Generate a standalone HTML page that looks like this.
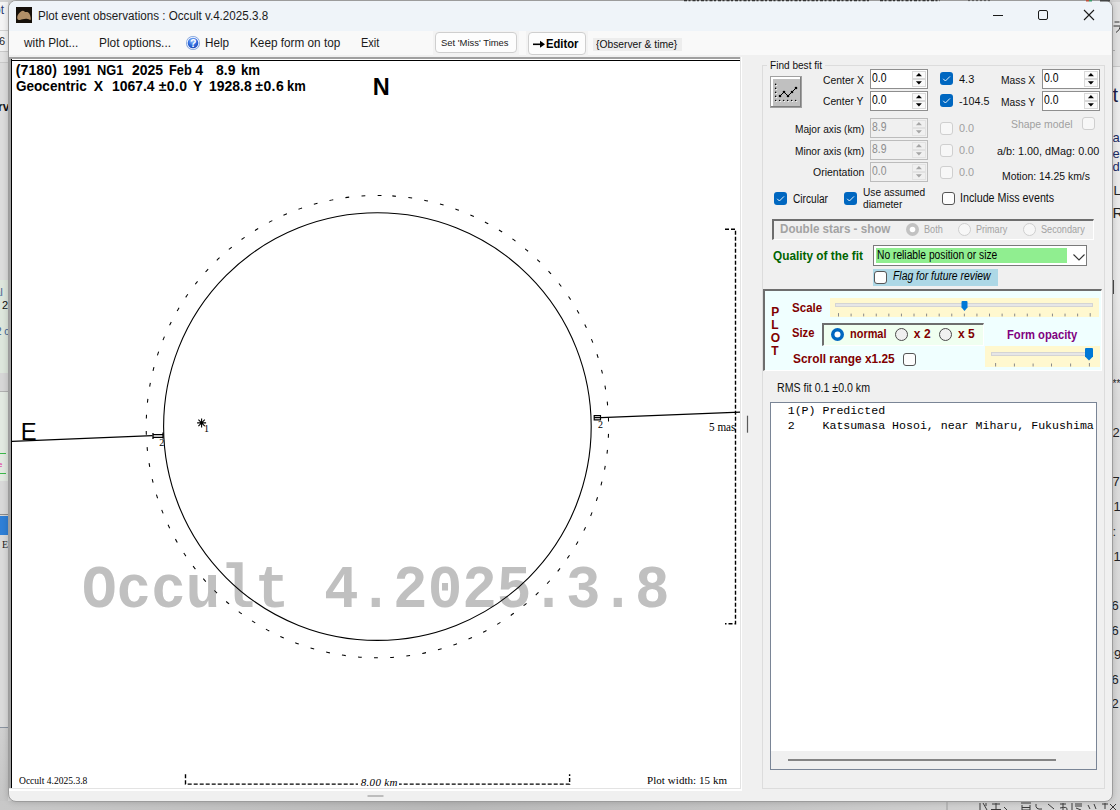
<!DOCTYPE html>
<html><head><meta charset="utf-8">
<style>
*{box-sizing:border-box}
html,body{margin:0;padding:0}
body{width:1120px;height:810px;overflow:hidden;position:relative;background:#d4d4d4;font-family:"Liberation Sans",sans-serif;color:#000}
.a{position:absolute;white-space:pre;line-height:1}
svg{position:absolute;overflow:visible}
</style></head>
<body>
<div class="a" style="left:0px;top:0px;width:1120px;height:810px;background:#d6d6d6"></div>
<div class="a" style="left:0px;top:0px;width:8px;height:30px;background:#f4f4f4"></div>
<div class="a" style="left:0px;top:30px;width:8px;height:1px;background:#d0d0d0"></div>
<div class="a" style="left:0px;top:31px;width:8px;height:20px;background:#f2f2f2"></div>
<div class="a" style="left:0px;top:51px;width:8px;height:1px;background:#c8c8c8"></div>
<div class="a" style="left:0px;top:52px;width:8px;height:10px;background:#e2e2e2"></div>
<div class="a" style="left:0px;top:62px;width:8px;height:1px;background:#c8c8c8"></div>
<div class="a" style="left:0px;top:63px;width:8px;height:217px;background:#dcdcdc"></div>
<div class="a" style="left:0px;top:280px;width:8px;height:93px;background:#dde6dc"></div>
<div class="a" style="left:0px;top:373px;width:8px;height:19px;background:#d6d6d6"></div>
<div class="a" style="left:0px;top:391px;width:8px;height:1px;background:#b0b0b0"></div>
<div class="a" style="left:-6px;top:399px;width:8px;height:19px;border:1px solid #a8a8a8;border-radius:3px;background:#ececec"></div>
<div class="a" style="left:-6px;top:425px;width:8px;height:20px;border:1px solid #a8a8a8;border-radius:3px;background:#ececec"></div>
<div class="a" style="left:4.5px;top:449px;width:3px;height:25px;border:1px solid #a8a8a8;border-radius:2px;background:#e8e8e8"></div>
<div class="a" style="left:0px;top:392px;width:8px;height:89px;background:#e2e9e1"></div>
<div class="a" style="left:0px;top:453px;width:6px;height:1px;background:#3cb84a"></div>
<div class="a" style="left:0px;top:473px;width:6px;height:1px;background:#3cb84a"></div>
<div class="a" style="left:0px;top:481px;width:8px;height:33px;background:#d8d8d8"></div>
<div class="a" style="left:0px;top:514px;width:8px;height:1px;background:#8a8a8a"></div>
<div class="a" style="left:0px;top:516px;width:8px;height:19px;background:#2f7fd6"></div>
<div class="a" style="left:0px;top:535px;width:8px;height:192px;background:#dadada"></div>
<div class="a" style="left:0px;top:727px;width:8px;height:1px;background:#8a93a0"></div>
<div class="a" style="left:0px;top:728px;width:8px;height:82px;background:linear-gradient(180deg,#d0d0d0,#c4c4c4)"></div>
<div class="a" style="left:0px;top:801px;width:1120px;height:9px;background:linear-gradient(90deg,#c8c8c8,#b9b9b9 40%,#c6c6c6 70%,#d8d8d8)"></div>
<div class="a" style="left:1112px;top:0px;width:8px;height:810px;background:linear-gradient(180deg,#e0e0e0 0,#e0e0e0 66px,#c8c8c8 66px,#c8c8c8 67px,#ececec 67px,#e8e8e8 300px,#dcdcdc 400px,#d6d6d6 810px)"></div>
<div class="a" style="left:0px;top:0px;width:1120px;height:2px;background:#d2d2d2"></div>
<div class="a" style="left:7.5px;top:0px;width:1105px;height:802px;background:#f0f0f0;border-radius:8px;border:1px solid #9c9c9c;box-shadow:0 0 6px rgba(0,0,0,0.18)"></div>
<div class="a" style="left:8.5px;top:1px;width:1103px;height:30px;background:#eff4f9;border-radius:7px 7px 0 0"></div>
<div class="a" style="left:9px;top:31px;width:1102px;height:24px;background:#f9f9f9"></div>
<svg style="left:16px;top:7px" width="16" height="16" viewBox="0 0 16 16"><rect width="16" height="16" fill="#15100a"/><path d="M1.2 11 C1 8 3 6 5 4.5 C6 3.5 7.5 3.2 8.5 4.5 C9.5 5.5 10.5 4.5 12 5.2 C14 6.5 15 10 14.8 12.8 C13.5 13 12 11.5 10 11.8 C7 12.2 6 12.5 4 13 C2.5 13.2 1.3 12.5 1.2 11 Z" fill="#b08f68"/></svg>
<div class="a" style="left:37.50px;top:10px;font-size:12px;color:#1b1b1b;transform:scaleX(0.9702);transform-origin:0 0;">Plot event observations : Occult v.4.2025.3.8</div>
<div class="a" style="left:993px;top:15px;width:10px;height:1px;background:#1a1a1a"></div>
<div class="a" style="left:1038px;top:10px;width:10px;height:10px;border:1px solid #1a1a1a;border-radius:2px"></div>
<svg style="left:1083px;top:9px" width="12" height="12" viewBox="0 0 12 12"><path d="M1 1L11 11M11 1L1 11" stroke="#1a1a1a" stroke-width="1.1"/></svg>
<div class="a" style="left:24.18px;top:37px;font-size:12px;color:#1a1a1a;transform:scaleX(0.9818);transform-origin:0 0;">with Plot...</div>
<div class="a" style="left:98.60px;top:37px;font-size:12px;color:#1a1a1a;transform:scaleX(0.9907);transform-origin:0 0;">Plot options...</div>
<svg style="left:186px;top:36px" width="14" height="14" viewBox="0 0 14 14"><defs><radialGradient id="hg" cx="0.45" cy="0.3" r="0.75"><stop offset="0" stop-color="#9cc4ff"/><stop offset="0.55" stop-color="#2f6de0"/><stop offset="1" stop-color="#1b44b0"/></radialGradient></defs><circle cx="7" cy="7" r="7" fill="#7d9fd8"/><circle cx="7" cy="7" r="6.2" fill="#eef4ff"/><circle cx="7" cy="7" r="5.3" fill="url(#hg)"/><text x="7.1" y="10.9" font-family="Liberation Sans" font-weight="bold" font-size="10.5" fill="#fff" text-anchor="middle">?</text></svg>
<div class="a" style="left:204.50px;top:37px;font-size:12px;color:#1a1a1a;transform:scaleX(0.9758);transform-origin:0 0;">Help</div>
<div class="a" style="left:250.40px;top:37px;font-size:12px;color:#1a1a1a;transform:scaleX(0.9807);transform-origin:0 0;">Keep form on top</div>
<div class="a" style="left:360.70px;top:37px;font-size:12px;color:#1a1a1a;transform:scaleX(0.9192);transform-origin:0 0;">Exit</div>
<div class="a" style="left:433px;top:31px;width:86px;height:25px;background:#f3f3f3"></div>
<div class="a" style="left:435px;top:32px;width:82px;height:21px;background:#fdfdfd;border:1px solid #cfcfcf;border-radius:4px"></div>
<div class="a" style="left:441.00px;top:38px;font-size:9.5px;color:#1a1a1a;transform:scaleX(0.9935);transform-origin:0 0;">Set &#x27;Miss&#x27; Times</div>
<div class="a" style="left:526px;top:31px;width:62px;height:25px;background:#f3f3f3"></div>
<div class="a" style="left:528px;top:32px;width:58px;height:22.5px;background:#fdfdfd;border:1px solid #cfcfcf;border-radius:4px"></div>
<svg style="left:533px;top:40px" width="13" height="9" viewBox="0 0 13 9"><path d="M0 4.3 H9" stroke="#000" stroke-width="1.6"/><path d="M7 0.8 L12 4.3 L7 7.8 Z" fill="#000"/></svg>
<div class="a" style="left:546.00px;top:38px;font-size:12.5px;font-weight:bold;transform:scaleX(0.8995);transform-origin:0 0;">Editor</div>
<div class="a" style="left:593px;top:38px;width:89px;height:13px;background:#ededed"></div>
<div class="a" style="left:596.00px;top:39px;font-size:11px;color:#101010;transform:scaleX(0.9353);transform-origin:0 0;">{Observer &amp; time}</div>
<div class="a" style="left:9px;top:57px;width:733px;height:734px;background:#fff"></div>
<div class="a" style="left:9px;top:57px;width:732px;height:2px;background:#a0a0a0"></div>
<div class="a" style="left:9px;top:57px;width:2px;height:731px;background:#a0a0a0"></div>
<div class="a" style="left:11px;top:59.6px;width:730px;height:1.5px;background:#000"></div>
<div class="a" style="left:11px;top:59px;width:1.2px;height:729px;background:#000"></div>
<div class="a" style="left:9px;top:788px;width:732px;height:1px;background:#e3e3e3"></div>
<div class="a" style="left:740px;top:57px;width:1px;height:732px;background:#e3e3e3"></div>
<div class="a" style="left:12px;top:61px;width:728px;height:727px;background:#fff"></div>
<div class="a" style="left:15.75px;top:63px;font-size:14px;font-weight:bold;letter-spacing:0.129px;">(7180)</div>
<div class="a" style="left:62.90px;top:63px;font-size:14px;font-weight:bold;transform:scaleX(0.8961);transform-origin:0 0;">1991</div>
<div class="a" style="left:96.80px;top:63px;font-size:14px;font-weight:bold;transform:scaleX(0.9172);transform-origin:0 0;">NG1</div>
<div class="a" style="left:132.30px;top:63px;font-size:14px;font-weight:bold;transform:scaleX(0.9981);transform-origin:0 0;">2025</div>
<div class="a" style="left:169.40px;top:63px;font-size:14px;font-weight:bold;transform:scaleX(0.9163);transform-origin:0 0;">Feb</div>
<div class="a" style="left:195.30px;top:63px;font-size:14px;font-weight:bold;">4</div>
<div class="a" style="left:215.60px;top:63px;font-size:14px;font-weight:bold;transform:scaleX(0.9961);transform-origin:0 0;">8.9</div>
<div class="a" style="left:240.60px;top:63px;font-size:14px;font-weight:bold;transform:scaleX(0.9451);transform-origin:0 0;">km</div>
<div class="a" style="left:16.00px;top:79px;font-size:14px;font-weight:bold;transform:scaleX(0.9679);transform-origin:0 0;">Geocentric</div>
<div class="a" style="left:93.70px;top:79px;font-size:14px;font-weight:bold;">X</div>
<div class="a" style="left:111.80px;top:79px;font-size:14px;font-weight:bold;transform:scaleX(0.9946);transform-origin:0 0;">1067.4</div>
<div class="a" style="left:158.70px;top:79px;font-size:14px;font-weight:bold;letter-spacing:0.380px;">±0.0</div>
<div class="a" style="left:193.00px;top:79px;font-size:14px;font-weight:bold;">Y</div>
<div class="a" style="left:208.90px;top:79px;font-size:14px;font-weight:bold;transform:scaleX(0.9957);transform-origin:0 0;">1928.8</div>
<div class="a" style="left:255.30px;top:79px;font-size:14px;font-weight:bold;letter-spacing:0.414px;">±0.6</div>
<div class="a" style="left:286.60px;top:79px;font-size:14px;font-weight:bold;transform:scaleX(0.9249);transform-origin:0 0;">km</div>
<div class="a" style="left:372.80px;top:76px;font-size:23.5px;font-weight:bold;">N</div>
<div class="a" style="left:20.85px;top:420px;font-size:23.8px;">E</div>
<div class="a" style="left:82.40px;top:563.27px;font-size:57.7px;font-family:'Liberation Mono';font-weight:bold;color:#c0c0c0;transform:scale(0.9985,1.05);transform-origin:0 44.23px;">Occult 4.2025.3.8</div>
<svg style="left:0;top:0" width="1120" height="810" viewBox="0 0 1120 810">
<defs><clipPath id="pc"><rect x="12" y="61" width="728" height="727"/></clipPath></defs>
<g clip-path="url(#pc)" fill="none" stroke="#000">
<circle cx="377.4" cy="426.6" r="213.8" stroke-width="1.1"/>
<circle cx="377.4" cy="426.6" r="231.2" stroke-width="1.05" stroke-dasharray="3.8 12.35" transform="rotate(-86.3 377.4 426.6)"/>
<path d="M12 441.3 L152.5 435.7" stroke-width="1.2"/>
<path d="M601 417.7 L740 412.2" stroke-width="1.2"/>
<path d="M153 433 V439 M163 432.5 V438.5 M153 434.6 H163 M153 437.4 H163" stroke-width="1.3"/>
<path d="M594.2 415 V420.5 M600.5 415 V420.5 M594.2 415.6 H600.5 M594.2 417.7 H600.5 M594.2 419.8 H600.5" stroke-width="1.2"/>
<path d="M197.1 422.9 H206.1 M201.6 418.4 V427.4 M198.4 419.7 L204.8 426.1 M204.8 419.7 L198.4 426.1" stroke-width="1.1"/>
<path d="M725 229.3 H735.5 V623.8 H725" stroke-width="1.4" stroke-dasharray="4 2"/>
<path d="M185.5 774.3 V784.1 H569.6 V774.3" stroke-width="1.4" stroke-dasharray="4 2"/>
</g>
<rect x="746.9" y="415.7" width="1.2" height="17" fill="#5a5a5a"/>
</svg>
<div class="a" style="left:159.30px;top:438px;font-size:10px;font-family:'Liberation Serif';">2</div>
<div class="a" style="left:598.00px;top:420px;font-size:10px;font-family:'Liberation Serif';">2</div>
<div class="a" style="left:204.00px;top:424px;font-size:10px;font-family:'Liberation Serif';">1</div>
<div class="a" style="left:709.30px;top:421px;font-size:12px;font-family:'Liberation Serif';transform:scaleX(0.9316);transform-origin:0 0;">5 mas</div>
<div class="a" style="left:18.75px;top:776px;font-size:10px;font-family:'Liberation Serif';transform:scaleX(0.9532);transform-origin:0 0;">Occult 4.2025.3.8</div>
<div class="a" style="left:647.00px;top:775px;font-size:11px;font-family:'Liberation Serif';letter-spacing:0.057px;">Plot width: 15 km</div>
<div class="a" style="left:358px;top:776px;width:41px;height:10px;background:#fff"></div>
<div class="a" style="left:360.70px;top:777px;font-size:11px;font-family:'Liberation Serif';font-style:italic;letter-spacing:0.320px;">8.00 km</div>
<div class="a" style="left:761.5px;top:64.5px;width:343px;height:724px;border:1px solid #dcdcdc"></div>
<div class="a" style="left:767px;top:58px;width:58px;height:12px;background:#f0f0f0"></div>
<div class="a" style="left:770.00px;top:60px;font-size:11.5px;color:#101010;transform:scaleX(0.8764);transform-origin:0 0;">Find best fit</div>
<svg style="left:770px;top:76px" width="32" height="32" viewBox="0 0 32 32">
<rect x="0" y="0" width="32" height="32" fill="#a0a0a0"/>
<rect x="1" y="1" width="30" height="30" fill="#7f7f7f"/>
<rect x="1" y="1" width="29" height="29" fill="#fff"/>
<rect x="3" y="3" width="27" height="27" fill="#c0c0c0"/>
<g fill="#fff"><circle cx="6.2" cy="8.9" r="1.1"/><circle cx="6.2" cy="12.9" r="1.1"/><circle cx="6.2" cy="16.9" r="1.1"/><circle cx="6.2" cy="20.9" r="1.1"/><circle cx="6.2" cy="25" r="1.1"/><circle cx="10.2" cy="25" r="1.1"/><circle cx="14.2" cy="25" r="1.1"/><circle cx="18.2" cy="25" r="1.1"/><circle cx="22.2" cy="25" r="1.1"/><circle cx="26.2" cy="25" r="1.1"/></g>
<g fill="#000"><circle cx="5.7" cy="8.4" r="0.8"/><circle cx="5.7" cy="12.4" r="0.8"/><circle cx="5.7" cy="16.4" r="0.8"/><circle cx="5.7" cy="20.4" r="0.8"/><circle cx="5.7" cy="24.5" r="0.8"/><circle cx="9.7" cy="24.5" r="0.8"/><circle cx="13.7" cy="24.5" r="0.8"/><circle cx="17.7" cy="24.5" r="0.8"/><circle cx="21.7" cy="24.5" r="0.8"/><circle cx="25.7" cy="24.5" r="0.8"/>
<circle cx="10" cy="20" r="1.3"/><circle cx="14" cy="16" r="1.3"/><circle cx="18" cy="20" r="1.3"/><circle cx="22" cy="16" r="1.3"/><circle cx="26" cy="12" r="1.3"/></g>
<path d="M10 20 L14 16 L18 20 L22 16 L26 12" stroke="#000" stroke-width="1" fill="none"/>
</svg>
<div class="a" style="left:870px;top:69px;width:58px;height:20px;border:1px solid #8e8e8e;background:#fff"></div>
<svg style="left:912px;top:71px" width="14" height="16" viewBox="0 0 14 16">
<rect x="0.5" y="0.5" width="13" height="7" fill="#fafafa" stroke="#d9d9d9"/>
<rect x="0.5" y="8.5" width="13" height="7" fill="#fafafa" stroke="#d9d9d9"/>
<path d="M3.9 5.2 L6.9 1.9 L9.9 5.2 Z" fill="#000"/><path d="M3.9 10.2 L6.9 13.5 L9.9 10.2 Z" fill="#000"/></svg>
<div class="a" style="left:872.30px;top:72px;font-size:12px;transform:scaleX(0.8643);transform-origin:0 0;">0.0</div>
<div class="a" style="left:870px;top:91px;width:58px;height:20px;border:1px solid #8e8e8e;background:#fff"></div>
<svg style="left:912px;top:93px" width="14" height="16" viewBox="0 0 14 16">
<rect x="0.5" y="0.5" width="13" height="7" fill="#fafafa" stroke="#d9d9d9"/>
<rect x="0.5" y="8.5" width="13" height="7" fill="#fafafa" stroke="#d9d9d9"/>
<path d="M3.9 5.2 L6.9 1.9 L9.9 5.2 Z" fill="#000"/><path d="M3.9 10.2 L6.9 13.5 L9.9 10.2 Z" fill="#000"/></svg>
<div class="a" style="left:872.30px;top:94px;font-size:12px;transform:scaleX(0.8643);transform-origin:0 0;">0.0</div>
<div class="a" style="left:870px;top:118px;width:58px;height:20px;border:1px solid #bcbcbc;background:#f0f0f0"></div>
<svg style="left:912px;top:120px" width="14" height="16" viewBox="0 0 14 16">
<rect x="0.5" y="0.5" width="13" height="7" fill="#f0f0f0" stroke="#e2e2e2"/>
<rect x="0.5" y="8.5" width="13" height="7" fill="#f0f0f0" stroke="#e2e2e2"/>
<path d="M3.9 5.2 L6.9 1.9 L9.9 5.2 Z" fill="#a6a6a6"/><path d="M3.9 10.2 L6.9 13.5 L9.9 10.2 Z" fill="#a6a6a6"/></svg>
<div class="a" style="left:872.30px;top:121px;font-size:12px;color:#8d8d8d;transform:scaleX(0.8643);transform-origin:0 0;">8.9</div>
<div class="a" style="left:870px;top:140px;width:58px;height:20px;border:1px solid #bcbcbc;background:#f0f0f0"></div>
<svg style="left:912px;top:142px" width="14" height="16" viewBox="0 0 14 16">
<rect x="0.5" y="0.5" width="13" height="7" fill="#f0f0f0" stroke="#e2e2e2"/>
<rect x="0.5" y="8.5" width="13" height="7" fill="#f0f0f0" stroke="#e2e2e2"/>
<path d="M3.9 5.2 L6.9 1.9 L9.9 5.2 Z" fill="#a6a6a6"/><path d="M3.9 10.2 L6.9 13.5 L9.9 10.2 Z" fill="#a6a6a6"/></svg>
<div class="a" style="left:872.30px;top:143px;font-size:12px;color:#8d8d8d;transform:scaleX(0.8643);transform-origin:0 0;">8.9</div>
<div class="a" style="left:870px;top:162px;width:58px;height:20px;border:1px solid #bcbcbc;background:#f0f0f0"></div>
<svg style="left:912px;top:164px" width="14" height="16" viewBox="0 0 14 16">
<rect x="0.5" y="0.5" width="13" height="7" fill="#f0f0f0" stroke="#e2e2e2"/>
<rect x="0.5" y="8.5" width="13" height="7" fill="#f0f0f0" stroke="#e2e2e2"/>
<path d="M3.9 5.2 L6.9 1.9 L9.9 5.2 Z" fill="#a6a6a6"/><path d="M3.9 10.2 L6.9 13.5 L9.9 10.2 Z" fill="#a6a6a6"/></svg>
<div class="a" style="left:872.30px;top:165px;font-size:12px;color:#8d8d8d;transform:scaleX(0.8643);transform-origin:0 0;">0.0</div>
<div class="a" style="left:1042px;top:69px;width:58px;height:20px;border:1px solid #8e8e8e;background:#fff"></div>
<svg style="left:1084px;top:71px" width="14" height="16" viewBox="0 0 14 16">
<rect x="0.5" y="0.5" width="13" height="7" fill="#fafafa" stroke="#d9d9d9"/>
<rect x="0.5" y="8.5" width="13" height="7" fill="#fafafa" stroke="#d9d9d9"/>
<path d="M3.9 5.2 L6.9 1.9 L9.9 5.2 Z" fill="#000"/><path d="M3.9 10.2 L6.9 13.5 L9.9 10.2 Z" fill="#000"/></svg>
<div class="a" style="left:1044.30px;top:72px;font-size:12px;transform:scaleX(0.8643);transform-origin:0 0;">0.0</div>
<div class="a" style="left:1042px;top:91px;width:58px;height:20px;border:1px solid #8e8e8e;background:#fff"></div>
<svg style="left:1084px;top:93px" width="14" height="16" viewBox="0 0 14 16">
<rect x="0.5" y="0.5" width="13" height="7" fill="#fafafa" stroke="#d9d9d9"/>
<rect x="0.5" y="8.5" width="13" height="7" fill="#fafafa" stroke="#d9d9d9"/>
<path d="M3.9 5.2 L6.9 1.9 L9.9 5.2 Z" fill="#000"/><path d="M3.9 10.2 L6.9 13.5 L9.9 10.2 Z" fill="#000"/></svg>
<div class="a" style="left:1044.30px;top:94px;font-size:12px;transform:scaleX(0.8643);transform-origin:0 0;">0.0</div>
<div class="a" style="left:822.50px;top:75px;font-size:11.5px;color:#101010;transform:scaleX(0.9035);transform-origin:0 0;">Center X</div>
<div class="a" style="left:822.50px;top:96px;font-size:11.5px;color:#101010;transform:scaleX(0.8925);transform-origin:0 0;">Center Y</div>
<div class="a" style="left:794.50px;top:124px;font-size:11.5px;color:#101010;transform:scaleX(0.8825);transform-origin:0 0;">Major axis (km)</div>
<div class="a" style="left:794.50px;top:146px;font-size:11.5px;color:#101010;transform:scaleX(0.8825);transform-origin:0 0;">Minor axis (km)</div>
<div class="a" style="left:813.00px;top:167px;font-size:11.5px;color:#101010;transform:scaleX(0.9130);transform-origin:0 0;">Orientation</div>
<svg style="left:940px;top:72px" width="13" height="13" viewBox="0 0 13 13"><rect x="0" y="0" width="13" height="13" rx="3" fill="#0067c0"/><path d="M3.2 6.8 L5.4 9 L10 4.4" stroke="#fff" stroke-width="0.9" fill="none"/></svg>
<svg style="left:940px;top:94px" width="13" height="13" viewBox="0 0 13 13"><rect x="0" y="0" width="13" height="13" rx="3" fill="#0067c0"/><path d="M3.2 6.8 L5.4 9 L10 4.4" stroke="#fff" stroke-width="0.9" fill="none"/></svg>
<div class="a" style="left:959.00px;top:74px;font-size:11.5px;color:#101010;transform:scaleX(0.9557);transform-origin:0 0;">4.3</div>
<div class="a" style="left:959.00px;top:96px;font-size:11.5px;color:#101010;transform:scaleX(0.9313);transform-origin:0 0;">-104.5</div>
<div class="a" style="left:1001.40px;top:75px;font-size:11.5px;color:#101010;transform:scaleX(0.8922);transform-origin:0 0;">Mass X</div>
<div class="a" style="left:1001.40px;top:97px;font-size:11.5px;color:#101010;transform:scaleX(0.8922);transform-origin:0 0;">Mass Y</div>
<div class="a" style="left:940px;top:121.5px;width:13px;height:13px;border:1px solid #cfcfcf;border-radius:3px;background:#f7f7f7"></div>
<div class="a" style="left:940px;top:143.7px;width:13px;height:13px;border:1px solid #cfcfcf;border-radius:3px;background:#f7f7f7"></div>
<div class="a" style="left:940px;top:165.8px;width:13px;height:13px;border:1px solid #cfcfcf;border-radius:3px;background:#f7f7f7"></div>
<div class="a" style="left:959.20px;top:123px;font-size:11.5px;color:#a0a0a0;transform:scaleX(0.9429);transform-origin:0 0;">0.0</div>
<div class="a" style="left:959.20px;top:145px;font-size:11.5px;color:#a0a0a0;transform:scaleX(0.9429);transform-origin:0 0;">0.0</div>
<div class="a" style="left:959.20px;top:167px;font-size:11.5px;color:#a0a0a0;transform:scaleX(0.9429);transform-origin:0 0;">0.0</div>
<div class="a" style="left:1011.00px;top:119px;font-size:11.5px;color:#a0a0a0;transform:scaleX(0.9075);transform-origin:0 0;">Shape model</div>
<div class="a" style="left:1081.5px;top:117.3px;width:13px;height:13px;border:1px solid #cfcfcf;border-radius:3px;background:#f7f7f7"></div>
<div class="a" style="left:997.20px;top:146px;font-size:11.5px;color:#101010;transform:scaleX(0.9400);transform-origin:0 0;">a/b: 1.00, dMag: 0.00</div>
<div class="a" style="left:1001.50px;top:171px;font-size:11.5px;color:#101010;transform:scaleX(0.9055);transform-origin:0 0;">Motion: 14.25 km/s</div>
<svg style="left:774.2px;top:192.4px" width="13" height="13" viewBox="0 0 13 13"><rect x="0" y="0" width="13" height="13" rx="3" fill="#0067c0"/><path d="M3.2 6.8 L5.4 9 L10 4.4" stroke="#fff" stroke-width="0.9" fill="none"/></svg>
<div class="a" style="left:792.60px;top:193px;font-size:12px;color:#101010;transform:scaleX(0.8466);transform-origin:0 0;">Circular</div>
<svg style="left:844px;top:192.4px" width="13" height="13" viewBox="0 0 13 13"><rect x="0" y="0" width="13" height="13" rx="3" fill="#0067c0"/><path d="M3.2 6.8 L5.4 9 L10 4.4" stroke="#fff" stroke-width="0.9" fill="none"/></svg>
<div class="a" style="left:863.20px;top:187px;font-size:11.5px;color:#101010;transform:scaleX(0.8840);transform-origin:0 0;">Use assumed</div>
<div class="a" style="left:863.20px;top:199px;font-size:11.5px;color:#101010;transform:scaleX(0.8795);transform-origin:0 0;">diameter</div>
<div class="a" style="left:942.3px;top:192.4px;width:13px;height:13px;border:1px solid #555;border-radius:3px;background:#fdfdfd"></div>
<div class="a" style="left:960.31px;top:192px;font-size:12px;color:#101010;transform:scaleX(0.8938);transform-origin:0 0;">Include Miss events</div>
<div class="a" style="left:772px;top:218.5px;width:322px;height:21px;border-top:2px solid #6e6e6e;border-left:2px solid #6e6e6e;border-bottom:1px solid #fff;border-right:1px solid #fff;background:#f0f0f0"></div>
<div class="a" style="left:780.40px;top:223px;font-size:12px;font-weight:bold;color:#a3a3a3;transform:scaleX(0.9679);transform-origin:0 0;">Double stars - show</div>
<svg style="left:906px;top:223px" width="13" height="13" viewBox="0 0 13 13"><circle cx="6.5" cy="6.5" r="6.5" fill="#c2c2c2"/><circle cx="6.5" cy="6.5" r="2.8" fill="#fff"/></svg>
<svg style="left:958px;top:223px" width="13" height="13" viewBox="0 0 13 13"><circle cx="6.5" cy="6.5" r="6" fill="#f7f7f7" stroke="#cfcfcf" stroke-width="1"/></svg>
<svg style="left:1023px;top:223px" width="13" height="13" viewBox="0 0 13 13"><circle cx="6.5" cy="6.5" r="6" fill="#f7f7f7" stroke="#cfcfcf" stroke-width="1"/></svg>
<div class="a" style="left:924.30px;top:225px;font-size:10px;color:#a3a3a3;transform:scaleX(0.9096);transform-origin:0 0;">Both</div>
<div class="a" style="left:976.30px;top:225px;font-size:10px;color:#a3a3a3;transform:scaleX(0.9058);transform-origin:0 0;">Primary</div>
<div class="a" style="left:1041.00px;top:225px;font-size:10px;color:#a3a3a3;transform:scaleX(0.9141);transform-origin:0 0;">Secondary</div>
<div class="a" style="left:772.90px;top:250px;font-size:12px;font-weight:bold;color:#006400;transform:scaleX(0.9854);transform-origin:0 0;">Quality of the fit</div>
<div class="a" style="left:873px;top:245.4px;width:214px;height:20.5px;border:1px solid #7a7a7a;background:#fff"></div>
<div class="a" style="left:876px;top:248px;width:191px;height:15px;background:#90ee90"></div>
<div class="a" style="left:876.60px;top:249px;font-size:12px;transform:scaleX(0.8549);transform-origin:0 0;">No reliable position or size</div>
<svg style="left:1072px;top:252px" width="14" height="10" viewBox="0 0 14 10"><path d="M1.5 2.5 L7 8 L12.5 2.5" stroke="#333" stroke-width="1.1" fill="none"/></svg>
<div class="a" style="left:873px;top:269px;width:125px;height:16.6px;background:#add8e6"></div>
<div class="a" style="left:873.5px;top:270.6px;width:13px;height:13px;border:1px solid #555;border-radius:3px;background:#fdfdfd"></div>
<div class="a" style="left:892.70px;top:270px;font-size:12px;font-style:italic;transform:scaleX(0.8654);transform-origin:0 0;">Flag for future review</div>
<div class="a" style="left:763.3px;top:289.4px;width:338.6px;height:81.2px;border-top:2px solid #6e6e6e;border-left:2px solid #6e6e6e;border-bottom:1px solid #fff;border-right:1px solid #fff;background:#f0ffff"></div>
<div class="a" style="left:771.30px;top:306px;font-size:12px;font-weight:bold;color:#800000;">P</div>
<div class="a" style="left:771.30px;top:319px;font-size:12px;font-weight:bold;color:#800000;">L</div>
<div class="a" style="left:770.70px;top:332px;font-size:12px;font-weight:bold;color:#800000;">O</div>
<div class="a" style="left:771.30px;top:345px;font-size:12px;font-weight:bold;color:#800000;">T</div>
<div class="a" style="left:791.70px;top:302px;font-size:12px;font-weight:bold;color:#800000;transform:scaleX(0.9626);transform-origin:0 0;">Scale</div>
<div class="a" style="left:791.70px;top:327px;font-size:12px;font-weight:bold;color:#800000;transform:scaleX(0.9327);transform-origin:0 0;">Size</div>
<div class="a" style="left:792.80px;top:353px;font-size:12px;font-weight:bold;color:#800000;transform:scaleX(0.9898);transform-origin:0 0;">Scroll range x1.25</div>
<div class="a" style="left:830px;top:298px;width:269px;height:18.7px;background:#fff8cf"></div>
<div class="a" style="left:835px;top:303px;width:258px;height:4px;background:#e6e6e6;border:1px solid #d4d4d4"></div>
<svg style="left:0;top:0" width="1120" height="810" viewBox="0 0 1120 810"><rect x="838.00" y="313.1" width="1" height="3.4" fill="#8a8a8a"/><rect x="850.59" y="313.6" width="1" height="2.8" fill="#8a8a8a"/><rect x="863.17" y="313.6" width="1" height="2.8" fill="#8a8a8a"/><rect x="875.75" y="313.6" width="1" height="2.8" fill="#8a8a8a"/><rect x="888.34" y="313.6" width="1" height="2.8" fill="#8a8a8a"/><rect x="900.92" y="313.6" width="1" height="2.8" fill="#8a8a8a"/><rect x="913.51" y="313.6" width="1" height="2.8" fill="#8a8a8a"/><rect x="926.10" y="313.6" width="1" height="2.8" fill="#8a8a8a"/><rect x="938.68" y="313.6" width="1" height="2.8" fill="#8a8a8a"/><rect x="951.26" y="313.6" width="1" height="2.8" fill="#8a8a8a"/><rect x="963.85" y="313.6" width="1" height="2.8" fill="#8a8a8a"/><rect x="976.43" y="313.6" width="1" height="2.8" fill="#8a8a8a"/><rect x="989.02" y="313.6" width="1" height="2.8" fill="#8a8a8a"/><rect x="1001.61" y="313.6" width="1" height="2.8" fill="#8a8a8a"/><rect x="1014.19" y="313.6" width="1" height="2.8" fill="#8a8a8a"/><rect x="1026.78" y="313.6" width="1" height="2.8" fill="#8a8a8a"/><rect x="1039.36" y="313.6" width="1" height="2.8" fill="#8a8a8a"/><rect x="1051.94" y="313.6" width="1" height="2.8" fill="#8a8a8a"/><rect x="1064.53" y="313.6" width="1" height="2.8" fill="#8a8a8a"/><rect x="1077.12" y="313.6" width="1" height="2.8" fill="#8a8a8a"/><rect x="1089.70" y="313.1" width="1" height="3.4" fill="#8a8a8a"/></svg>
<svg style="left:960.5px;top:300.8px" width="7" height="10" viewBox="0 0 7 10"><path d="M0.5 1 Q0.5 0 1.5 0 H5.5 Q6.5 0 6.5 1 V6.5 L3.5 10 L0.5 6.5 Z" fill="#0078d7"/></svg>
<div class="a" style="left:821.6px;top:323.3px;width:162.1px;height:22.5px;border-top:2px solid #6e6e6e;border-left:2px solid #6e6e6e;border-bottom:1px solid #fff;border-right:1px solid #fff;background:#f0fff0"></div>
<svg style="left:831px;top:328px" width="13" height="13" viewBox="0 0 13 13"><circle cx="6.5" cy="6.5" r="6.5" fill="#0067c0"/><circle cx="6.5" cy="6.5" r="3" fill="#fff"/></svg>
<svg style="left:895px;top:328px" width="13" height="13" viewBox="0 0 13 13"><circle cx="6.5" cy="6.5" r="6" fill="#f0f0f0" stroke="#4a4a4a" stroke-width="1"/></svg>
<svg style="left:939px;top:328px" width="13" height="13" viewBox="0 0 13 13"><circle cx="6.5" cy="6.5" r="6" fill="#f0f0f0" stroke="#4a4a4a" stroke-width="1"/></svg>
<div class="a" style="left:849.70px;top:328px;font-size:12px;font-weight:bold;color:#800000;transform:scaleX(0.9124);transform-origin:0 0;">normal</div>
<div class="a" style="left:913.70px;top:328px;font-size:12px;font-weight:bold;color:#800000;letter-spacing:0.096px;">x 2</div>
<div class="a" style="left:958.00px;top:328px;font-size:12px;font-weight:bold;color:#800000;letter-spacing:0.046px;">x 5</div>
<div class="a" style="left:903.3px;top:353.3px;width:13px;height:13px;border:1px solid #555;border-radius:3px;background:#fdfdfd"></div>
<div class="a" style="left:1006.90px;top:329px;font-size:12px;font-weight:bold;color:#800080;transform:scaleX(0.9330);transform-origin:0 0;">Form opacity</div>
<div class="a" style="left:985px;top:346.25px;width:115px;height:20.6px;background:#fff8cf"></div>
<div class="a" style="left:991.2px;top:352.2px;width:101.8px;height:3.6px;background:#e6e6e6;border:1px solid #d4d4d4"></div>
<svg style="left:0;top:0" width="1120" height="810" viewBox="0 0 1120 810"><rect x="995.10" y="363.0" width="1" height="3.5" fill="#8a8a8a"/><rect x="1013.90" y="363.5" width="1" height="3" fill="#8a8a8a"/><rect x="1032.60" y="363.5" width="1" height="3" fill="#8a8a8a"/><rect x="1051.00" y="363.5" width="1" height="3" fill="#8a8a8a"/><rect x="1070.10" y="363.5" width="1" height="3" fill="#8a8a8a"/><rect x="1088.90" y="363.0" width="1" height="3.5" fill="#8a8a8a"/></svg>
<svg style="left:1085px;top:348px" width="8" height="12.5" viewBox="0 0 8 12.5"><path d="M0 1 Q0 0 1 0 H7 Q8 0 8 1 V8.5 L4 12.5 L0 8.5 Z" fill="#0078d7"/></svg>
<div class="a" style="left:777.00px;top:382px;font-size:12px;color:#101010;transform:scaleX(0.8833);transform-origin:0 0;">RMS fit 0.1 ±0.0 km</div>
<div class="a" style="left:769.5px;top:402.3px;width:327.2px;height:367.3px;border:1px solid #7a8596;background:#fff"></div>
<div class="a" style="left:770.5px;top:751px;width:325px;height:17.6px;background:#f0f0f0"></div>
<div class="a" style="left:788px;top:758.6px;width:268px;height:2px;background:#858585"></div>
<div class="a" style="left:787.70px;top:405px;font-size:11.6px;font-family:'Liberation Mono';">1(P) Predicted</div>
<div class="a" style="left:787.70px;top:420px;font-size:11.6px;font-family:'Liberation Mono';">2    Katsumasa Hosoi, near Miharu, Fukushima</div>
<div class="a" style="left:0;top:0;width:7.5px;height:810px;overflow:hidden">
<div class="a" style="left:-6px;top:4px;font-size:12px;color:#2a3a70">pt</div>
<div class="a" style="left:-7px;top:36px;font-size:11px;color:#222">16</div>
<div class="a" style="left:-2px;top:101px;font-size:12px;font-weight:bold;color:#111">rv</div>
<div class="a" style="left:-5px;top:288px;font-size:10px;color:#3a5a8a">al</div>
<div class="a" style="left:2px;top:300px;font-size:11px;color:#111">2</div>
<div class="a" style="left:-4px;top:327px;font-size:10px;color:#3a5a8a">2 c</div>
<div class="a" style="left:-2px;top:461px;font-size:8px;color:#e0309a">e</div>
<div class="a" style="left:2px;top:540px;font-size:10px;font-family:'Liberation Serif';color:#222">E</div>
</div>
<div class="a" style="left:1112.5px;top:0;width:7.5px;height:810px;overflow:hidden">
<svg style="left:0;top:0" width="8" height="40" viewBox="0 0 8 40"><path d="M1.5 22 H6.5 M0.5 26 H7.5 Q7 30 3 32.5" stroke="#333" stroke-width="1" fill="none"/><rect x="0.5" y="50" width="1" height="1" fill="#777"/></svg>
<div class="a" style="left:0px;top:85px;font-size:20px;color:#1a1a40">t</div>
<div class="a" style="left:0px;top:131px;font-size:13px;color:#1a2a60">a</div>
<div class="a" style="left:0px;top:147px;font-size:13px;color:#1a2a60">er</div>
<div class="a" style="left:0px;top:160px;font-size:13px;color:#1a2a60">d</div>
<div class="a" style="left:1px;top:184px;font-size:13px;color:#222">L</div>
<div class="a" style="left:0px;top:205px;font-size:15px;color:#222">R</div>
<div class="a" style="left:0.5px;top:280px;width:1px;height:14px;background:#444"></div>
<div class="a" style="left:0px;top:379px;font-size:10px;color:#222">**</div>
<div class="a" style="left:0px;top:426px;font-size:13px;color:#222">2</div>
<div class="a" style="left:0px;top:475px;font-size:13px;color:#222">7</div>
<div class="a" style="left:1px;top:500px;font-size:13px;color:#222">1</div>
<div class="a" style="left:0px;top:525px;font-size:13px;color:#222">:</div>
<div class="a" style="left:1px;top:550px;font-size:13px;color:#222">1</div>
<div class="a" style="left:-1px;top:599px;font-size:13px;color:#222">6</div>
<div class="a" style="left:-1px;top:624px;font-size:13px;color:#222">6</div>
<div class="a" style="left:-2px;top:648px;font-size:13px;color:#222">:9</div>
<div class="a" style="left:-1px;top:673px;font-size:13px;color:#222">6</div>
<div class="a" style="left:-1px;top:697px;font-size:13px;color:#222">2</div>
</div>
<svg style="left:0;top:0" width="1120" height="810" viewBox="0 0 1120 810">
<rect x="946.5" y="802" width="1" height="8" fill="#9a9a9a"/>
<rect x="367.5" y="795.5" width="16" height="1" fill="#8a8a8a"/>
<g stroke="#3a3a3a" stroke-width="1" fill="none">
<path d="M980 803 V810 M983 803 L987 810 M986 803 V806"/>
<path d="M992 804 H1000 M996 803 V810 M991 809.5 H1001"/>
<path d="M1004 807 L1007 810"/>
<path d="M1021 803 H1031 M1022 805 V810 H1030 V805 M1022 807.5 H1030"/>
<path d="M1036 804 Q1035 810 1042 809"/>
<path d="M1048 804 L1054 809"/>
<path d="M1060 804 H1066 M1063 803 V810 M1060 808 Q1068 806 1067 810"/>
<path d="M1072 803 V810 M1075 804 H1082 M1075 806 H1082 M1076 808 L1081 810"/>
<path d="M1088 805 L1090 809 M1094 804 L1096 809"/>
<path d="M1102 804 H1108 M1105 803 V809 M1110 804 L1116 810 M1116 804 L1110 810"/>
</g></svg>
<svg style="left:0;top:0" width="1120" height="3" viewBox="0 0 1120 3">
<path d="M684 0.6 H870" stroke="#333" stroke-width="1.2" stroke-dasharray="3 1.5 2 2"/>
<path d="M880 0.6 H940" stroke="#333" stroke-width="1.2" stroke-dasharray="3 1.5 2 2"/>
<path d="M968 0.6 H990" stroke="#555" stroke-width="1" stroke-dasharray="2 2"/>
<rect x="1086" y="0" width="3" height="1.5" fill="#c0503a"/><rect x="1089" y="0" width="3" height="1.5" fill="#3a9a6a"/><rect x="1100" y="0" width="10" height="1.5" fill="#444"/>
</svg>
</body></html>
